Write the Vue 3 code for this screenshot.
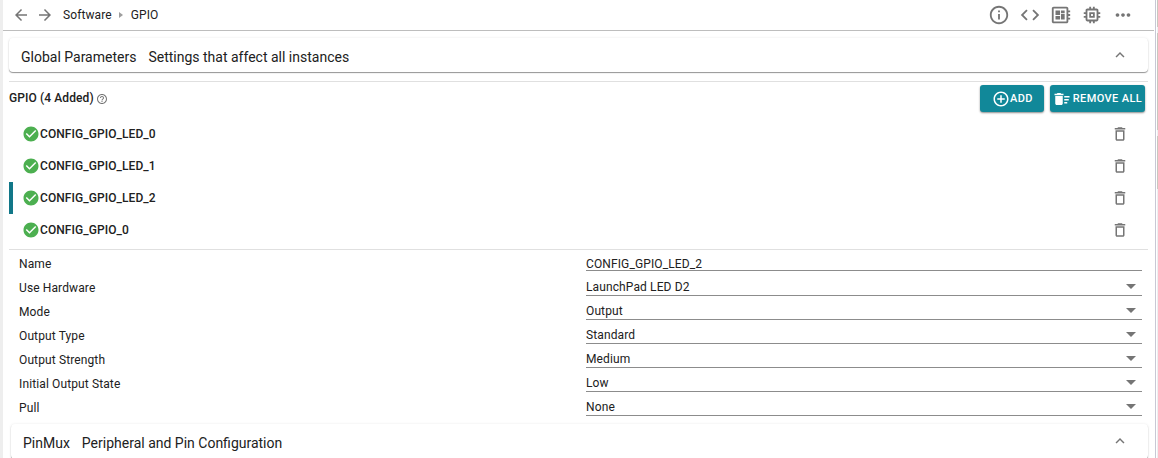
<template>
  <div class="page">
    <div class="gutter"></div>
    <main class="panel">
      <header class="toolbar">
        <div class="nav">
          <svg class="icon nav-icon" viewBox="0 0 24 24"><path :d="icons.back" /></svg>
          <svg class="icon nav-icon" viewBox="0 0 24 24"><path :d="icons.forward" /></svg>
          <span class="crumb">Software</span>
          <span class="crumb-arrow"></span>
          <span class="crumb">GPIO</span>
        </div>
        <div class="tools">
          <svg v-for="name in tools" :key="name" class="icon tool-icon" viewBox="0 0 24 24">
            <path :d="icons[name]" />
          </svg>
        </div>
      </header>

      <section class="card">
        <span class="card-title">Global Parameters</span>
        <span class="card-text">Settings that affect all instances</span>
        <svg class="icon chevron" viewBox="0 0 24 24"><path :d="icons.up" /></svg>
      </section>

      <section class="instances">
        <div class="instances-header">
          <h2>GPIO (4 Added)</h2>
          <svg class="icon help" viewBox="0 0 24 24"><path :d="icons.help" /></svg>
          <button class="btn btn-add">
            <svg class="icon" viewBox="0 0 24 24"><path :d="icons.add" /></svg>ADD
          </button>
          <button class="btn btn-remove">
            <svg class="icon" viewBox="0 0 24 24"><path :d="icons.sweep" /></svg>REMOVE ALL
          </button>
        </div>
        <ul class="list">
          <li v-for="item in instances" :key="item" :class="{ selected: item === selected }">
            <svg class="icon check" viewBox="0 0 24 24"><path :d="icons.check" /></svg>
            <span>{{ item }}</span>
            <svg class="icon trash" viewBox="0 0 24 24"><path :d="icons.trash" /></svg>
          </li>
        </ul>
      </section>

      <section class="form">
        <div v-for="field in fields" :key="field.label" class="row">
          <label>{{ field.label }}</label>
          <div class="control" :class="{ input: field.input }">
            <span>{{ field.value }}</span>
            <i v-if="!field.input" class="caret"></i>
          </div>
        </div>
      </section>

      <section class="card card-pinmux">
        <span class="card-title">PinMux</span>
        <span class="card-text">Peripheral and Pin Configuration</span>
        <svg class="icon chevron" viewBox="0 0 24 24"><path :d="icons.up" /></svg>
      </section>
    </main>
    <div class="scroll-edge">
      <div class="mark mark-top"></div>
      <div class="mark mark-middle"></div>
      <div class="mark mark-bottom"></div>
    </div>
  </div>
</template>

<script setup>
import { ref } from "vue";

const icons = {
  back: "M20 11H7.83l5.59-5.59L12 4l-8 8 8 8 1.41-1.41L7.83 13H20v-2z",
  forward: "M12 4l-1.41 1.41L16.17 11H4v2h12.17l-5.58 5.59L12 20l8-8z",
  info: "M11 7h2v2h-2zm0 4h2v6h-2zm1-9C6.48 2 2 6.48 2 12s4.48 10 10 10 10-4.48 10-10S17.52 2 12 2zm0 18c-4.41 0-8-3.59-8-8s3.59-8 8-8 8 3.59 8 8-3.59 8-8 8z",
  code: "M9.4 16.6L4.8 12l4.6-4.6L8 6l-6 6 6 6 1.4-1.4zm5.2 0l4.6-4.6-4.6-4.6L16 6l6 6-6 6-1.4-1.4z",
  board:
    "M22 9V7h-2V5c0-1.1-.9-2-2-2H4c-1.1 0-2 .9-2 2v14c0 1.1.9 2 2 2h14c1.1 0 2-.9 2-2v-2h2v-2h-2v-2h2v-2h-2V9h2zm-4 10H4V5h14v14zM6 13h5v4H6zm6-6h4v3h-4zM6 7h5v5H6zm6 4h4v6h-4z",
  chip: "M15 9H9v6h6V9zm-2 4h-2v-2h2v2zm8-2V9h-2V7c0-1.1-.9-2-2-2h-2V3h-2v2h-2V3H9v2H7c-1.1 0-2 .9-2 2v2H3v2h2v2H3v2h2v2c0 1.1.9 2 2 2h2v2h2v-2h2v2h2v-2h2c1.1 0 2-.9 2-2v-2h2v-2h-2v-2h2zm-4 6H7V7h10v10z",
  more: "M6 10c-1.1 0-2 .9-2 2s.9 2 2 2 2-.9 2-2-.9-2-2-2zm12 0c-1.1 0-2 .9-2 2s.9 2 2 2 2-.9 2-2-.9-2-2-2zm-6 0c-1.1 0-2 .9-2 2s.9 2 2 2 2-.9 2-2-.9-2-2-2z",
  up: "M12 8l-6 6 1.41 1.41L12 10.83l4.59 4.58L18 14z",
  help: "M11 18h2v-2h-2v2zm1-16C6.48 2 2 6.48 2 12s4.48 10 10 10 10-4.48 10-10S17.52 2 12 2zm0 18c-4.41 0-8-3.59-8-8s3.59-8 8-8 8 3.59 8 8-3.59 8-8 8zm0-14c-2.21 0-4 1.79-4 4h2c0-1.1.9-2 2-2s2 .9 2 2c0 2-3 1.75-3 5h2c0-2.25 3-2.5 3-5 0-2.21-1.79-4-4-4z",
  add: "M13 7h-2v4H7v2h4v4h2v-4h4v-2h-4V7zm-1-5C6.48 2 2 6.48 2 12s4.48 10 10 10 10-4.48 10-10S17.52 2 12 2zm0 18c-4.41 0-8-3.59-8-8s3.59-8 8-8 8 3.59 8 8-3.59 8-8 8z",
  sweep: "M15 16h4v2h-4zm0-8h7v2h-7zm0 4h6v2h-6zM3 18c0 1.1.9 2 2 2h6c1.1 0 2-.9 2-2V8H3v10zM14 5h-3l-1-1H6L5 5H2v2h12z",
  check: "M12 2C6.48 2 2 6.48 2 12s4.48 10 10 10 10-4.48 10-10S17.52 2 12 2zm-2 15l-5-5 1.41-1.41L10 14.17l7.59-7.59L19 8l-9 9z",
  trash: "M6 19c0 1.1.9 2 2 2h8c1.1 0 2-.9 2-2V7H6v12zM8 9h8v10H8V9zm7.5-5l-1-1h-5l-1 1H5v2h14V4z",
};

const tools = ["info", "code", "board", "chip", "more"];

const instances = ["CONFIG_GPIO_LED_0", "CONFIG_GPIO_LED_1", "CONFIG_GPIO_LED_2", "CONFIG_GPIO_0"];
const selected = ref("CONFIG_GPIO_LED_2");

const fields = [
  { label: "Name", value: "CONFIG_GPIO_LED_2", input: true },
  { label: "Use Hardware", value: "LaunchPad LED D2" },
  { label: "Mode", value: "Output" },
  { label: "Output Type", value: "Standard" },
  { label: "Output Strength", value: "Medium" },
  { label: "Initial Output State", value: "Low" },
  { label: "Pull", value: "None" },
];
</script>

<style>
body {
  margin: 0;
  overflow: hidden;
}
</style>

<style scoped>
.page {
  display: flex;
  height: 458px;
  overflow: hidden;
  background: #fff;
  color: #212121;
  font-family: Roboto, "Liberation Sans", sans-serif;
  font-size: 12px;
}

.icon {
  display: block;
  flex-shrink: 0;
  fill: currentColor;
}

.gutter {
  width: 3px;
  background: #eee;
}

.panel {
  flex: 1;
  min-width: 0;
}

.toolbar {
  display: flex;
  justify-content: space-between;
  align-items: center;
  box-sizing: border-box;
  height: 31px;
  margin-right: 1px;
  padding: 0 20px 0 9px;
  border-bottom: 1px solid #bdbdbd;
}

.nav {
  display: flex;
  align-items: center;
}

.nav-icon {
  width: 18px;
  height: 18px;
  margin-right: 6px;
  color: #757575;
}

.crumb {
  letter-spacing: 0.1px;
}

.nav-icon + .crumb {
  margin-left: 3px;
}

.crumb-arrow {
  margin: 0 8px 0 7px;
  border: 3px solid transparent;
  border-left: 4px solid #9e9e9e;
  border-right: 0;
}

.tools {
  display: flex;
  gap: 9px;
  color: #757575;
}

.tool-icon {
  width: 22px;
  height: 22px;
}

.card {
  display: flex;
  align-items: center;
  box-sizing: border-box;
  height: 34px;
  margin: 7px 7px 0 6px;
  padding: 3px 19px 0 12px;
  border-radius: 4px;
  box-shadow: 0 1px 1px rgba(0, 0, 0, 0.4), 0 0 3px rgba(0, 0, 0, 0.08);
  font-size: 14px;
}

.card-text {
  margin-left: 12px;
}

.chevron {
  width: 18px;
  height: 18px;
  margin: -3px 0 0 auto;
  color: #757575;
}

.instances {
  margin: 9px 7px 0 6px;
  border-top: 1px solid #e0e0e0;
  border-bottom: 1px solid #e0e0e0;
}

.instances-header {
  display: flex;
  align-items: center;
  height: 33px;
  padding-right: 3px;
}

h2 {
  margin: -2px 0 0;
  font-size: 12px;
  font-weight: 500;
  letter-spacing: 0.1px;
}

.help {
  width: 12px;
  height: 12px;
  margin: 1px auto 0 2px;
  color: #757575;
}

.btn {
  display: flex;
  align-items: center;
  justify-content: center;
  height: 27px;
  margin-left: 6px;
  padding: 0;
  border: none;
  border-radius: 3px;
  background: #118899;
  box-shadow: 0 1px 2px rgba(0, 0, 0, 0.45);
  color: #fff;
  font: 500 11px Roboto, sans-serif;
  letter-spacing: 0.4px;
}

.btn .icon {
  width: 18px;
  height: 18px;
}

.btn-add {
  width: 64px;
}

.btn-add .icon {
  margin-left: 1px;
}

.btn-remove {
  width: 95px;
}

.btn-remove .icon {
  margin-right: 2px;
}

.list {
  margin: 3px 0;
  padding: 0;
  list-style: none;
}

.list li {
  display: flex;
  align-items: center;
  box-sizing: border-box;
  height: 32px;
  padding: 0 19px 0 9px;
  border-left: 4px solid transparent;
  font-weight: 500;
  letter-spacing: 0.08px;
}

.list li.selected {
  border-left-color: #117788;
}

.check {
  width: 18px;
  height: 18px;
  color: #4caf50;
}

.trash {
  width: 18px;
  height: 18px;
  margin-left: auto;
  color: #757575;
}

.form {
  margin: 2px 13px 0 16px;
}

.row {
  display: flex;
  height: 24px;
  line-height: 24px;
  letter-spacing: 0.12px;
}

.row label {
  width: 567px;
}

.control {
  display: flex;
  flex: 1;
  align-items: center;
  justify-content: space-between;
  box-sizing: border-box;
  height: 20px;
  padding: 2px 6px 0 0;
  border-bottom: 1px solid #8c8c8c;
}

.control.input {
  height: 19px;
  padding-top: 6px;
}

.caret {
  border: 5px solid transparent;
  border-top-color: #757575;
  border-bottom: 0;
}

.card-pinmux {
  height: 35px;
  margin: 4px 7px 0 8px;
}

.card-pinmux .chevron {
  margin-top: -5px;
}

.scroll-edge {
  display: flex;
  flex-direction: column;
  gap: 6px;
  width: 1px;
  padding-left: 1px;
  border-left: 1px solid #c8c8d4;
  background: linear-gradient(90deg, #fff 1px, #eeeef0 1px);
}

.mark {
  background: #c9c8c0;
}

.mark-top {
  height: 27px;
}

.mark-middle {
  height: 97px;
}

.mark-bottom {
  height: 53px;
}
</style>
